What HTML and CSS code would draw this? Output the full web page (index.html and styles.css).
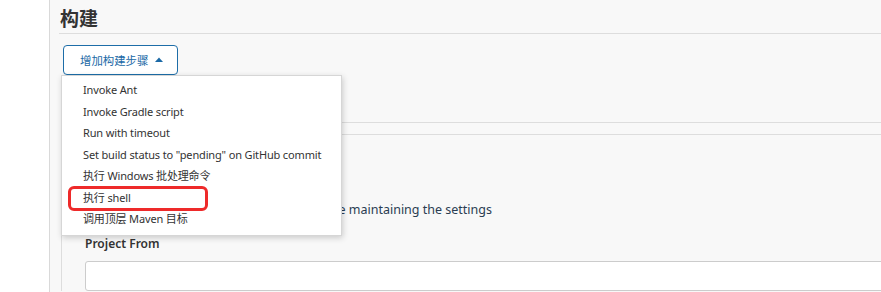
FILE: index.html
```html
<!DOCTYPE html>
<html lang="zh-CN">
<head>
  <meta charset="UTF-8">
  <title>构建</title>
  <link rel="stylesheet" href="styles.css">
</head>
<body>
  <div class="page">
    <div class="sidebar"></div>
    <div class="main">
      <h2 class="section-title">构建</h2>
      <div class="actions">
        <button class="add-step">增加构建步骤
          <svg class="caret" width="8" height="5" viewBox="0 0 8 5"><path d="M0 5 L4 0.5 L8 5 Z" fill="currentColor"/></svg>
        </button>
        <ul class="step-menu">
          <li>Invoke Ant</li>
          <li>Invoke Gradle script</li>
          <li>Run with timeout</li>
          <li>Set build status to "pending" on GitHub commit</li>
          <li>执行 Windows 批处理命令</li>
          <li>执行 shell</li>
          <li>调用顶层 Maven 目标</li>
          <span class="highlight"></span>
        </ul>
      </div>
      <div class="divider"></div>
      <div class="step">
        <p class="step-help">Clean the workspace while maintaining the settings</p>
        <label class="step-label" for="projectFrom">Project From</label>
        <input class="step-input" id="projectFrom" type="text">
      </div>
    </div>
  </div>
</body>
</html>
```

FILE: styles.css
```css
body {
  margin: 0;
  font-family: "Noto Sans", "Noto Sans CJK SC", sans-serif;
  color: #333;
  background: #fff;
}
.page {
  display: flex;
  height: 292px;
  overflow: hidden;
}
.sidebar {
  width: 49px;
  flex: none;
  border-right: 1px solid #d9d9d9;
  background: #fff;
}
.main {
  flex: 1;
  background: #f8f8f8;
  padding-left: 9px;
  min-width: 0;
}
.section-title {
  margin: 0;
  padding: 6px 0 0 1px;
  height: 27px;
  line-height: 27px;
  font-size: 19px;
  font-weight: bold;
  color: #333;
  border-bottom: 1px solid #ddd;
}
.actions {
  position: relative;
  padding: 11px 0 0 4px;
}
.add-step {
  display: flex;
  align-items: center;
  gap: 7px;
  height: 30px;
  width: 115px;
  padding: 0 0 0 16px;
  font-family: "Noto Sans", "Noto Sans CJK SC", sans-serif;
  font-size: 11.4px;
  color: #1b69a6;
  background: #fff;
  border: 1px solid #1d6da8;
  border-radius: 4px;
}
.caret {
  margin-top: -1px;
}
.step-menu {
  position: absolute;
  top: 41px;
  left: 2px;
  z-index: 2;
  width: 279px;
  margin: 0;
  padding: 3px 0 5px;
  list-style: none;
  background: #fff;
  border: 1px solid #d6d6d6;
  box-shadow: 1px 2px 6px rgba(0, 0, 0, 0.18);
}
.step-menu li {
  height: 21.5px;
  line-height: 21.5px;
  padding-left: 21px;
  font-size: 11px;
  letter-spacing: -0.15px;
  color: #333;
  white-space: nowrap;
}
.highlight {
  position: absolute;
  left: 6px;
  top: 110px;
  width: 134px;
  height: 19px;
  border: 3px solid #ee2a2a;
  border-radius: 6px;
}
.divider {
  margin-top: 47px;
  margin-left: 2px;
  border-top: 1px solid #ddd;
}
.step {
  margin-top: 11px;
  margin-left: 2px;
  padding: 66px 0 0 23px;
  border-top: 1px solid #ddd;
  border-left: 1px solid #ddd;
}
.step-help {
  margin: 0;
  width: 407px;
  height: 18px;
  line-height: 18px;
  font-size: 12.5px;
  text-align: right;
  color: #2a3d52;
  white-space: nowrap;
}
.step-label {
  display: block;
  margin-top: 16px;
  height: 18px;
  line-height: 18px;
  font-size: 12px;
  font-weight: 600;
  color: #333;
}
.step-input {
  display: block;
  margin-top: 8px;
  width: 900px;
  height: 30px;
  box-sizing: border-box;
  border: 1px solid #ccc;
  border-radius: 3px;
  background: #fff;
}
```
